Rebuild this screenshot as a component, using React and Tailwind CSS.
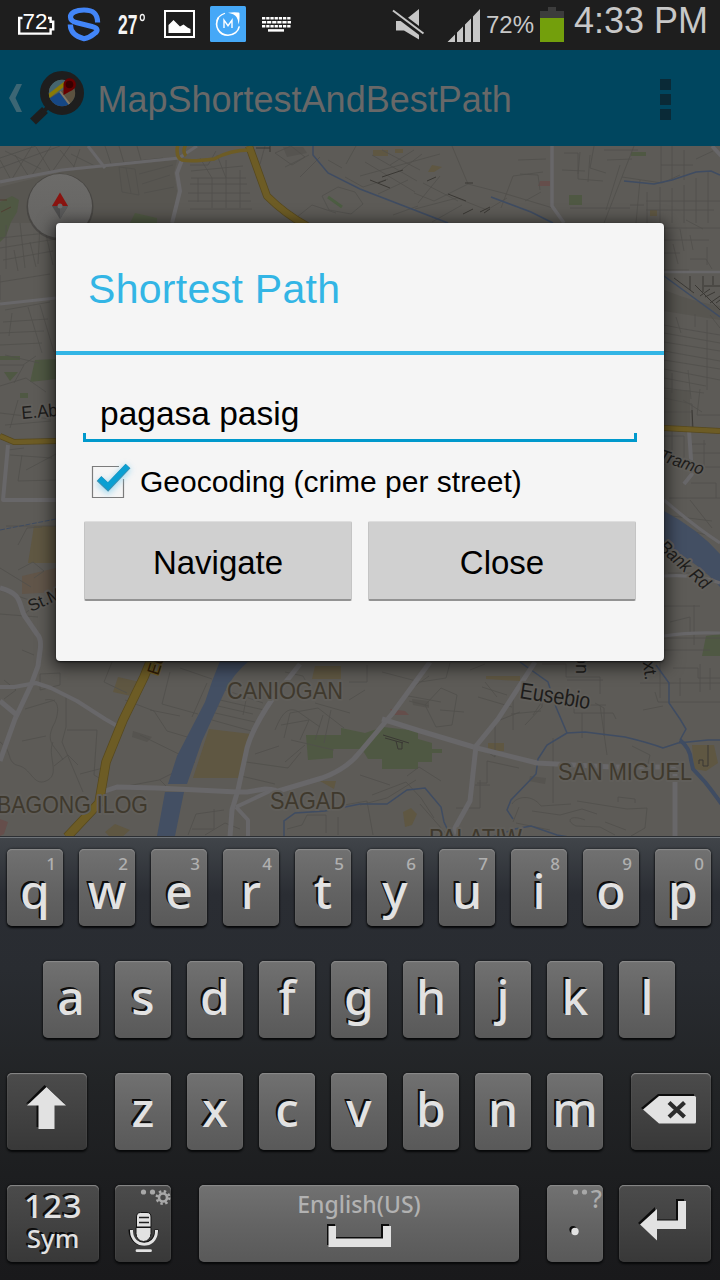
import React from "react";

const SANS = "font-['Liberation_Sans',Arial,sans-serif]";

function StatusBar() {
  return (
    <header className="flex h-[50px] shrink-0 items-start bg-[#1e1e1e] pl-[17px]">
      <svg className="h-[50px] w-[38px]" viewBox="17 0 38 50" aria-hidden="true">
        <path d="M22.500 18h-3.300v15.600h31.400v-4.200h2.600v-7.600h-2.600V18H48" fill="none" stroke="#fff" strokeWidth="2.400" />
        <text x="22.600" y="29.200" fontSize="22.500" textLength="25" lengthAdjust="spacingAndGlyphs" fill="#fff" fontFamily="Liberation Sans, Arial, sans-serif">72</text>
      </svg>
      <svg className="ml-[12px] h-[50px] w-[34px]" viewBox="67 0 34 50" aria-hidden="true">
        <path d="M97.600 22.500C97.500 12.500 92 10 84 10S70.500 12.500 70.500 17c0 3.500 2.500 4.800 6.500 5.800l15 3.700c6.500 1.700 6 4.500 2.500 7C91 36.500 88 38 84 38.700 79 37.500 70.500 34 70.300 24.500" fill="none" stroke="#4285f8" strokeWidth="5.200" strokeLinejoin="round" />
      </svg>
      <svg className="ml-[16px] h-[50px] w-[31px]" viewBox="117 0 31 50" aria-hidden="true">
        <text x="118" y="34" fontSize="28" fontWeight="700" textLength="19.500" lengthAdjust="spacingAndGlyphs" fill="#f4f4f4" fontFamily="Liberation Sans, Arial, sans-serif">27</text>
        <ellipse cx="142.300" cy="17.500" rx="2" ry="3" fill="none" stroke="#f4f4f4" strokeWidth="1.300" />
      </svg>
      <svg className="ml-[16px] h-[50px] w-[31px]" viewBox="164 0 31 50" aria-hidden="true">
        <rect x="165" y="11" width="29" height="26" fill="none" stroke="#fff" strokeWidth="2" />
        <path d="M168.500 33v-8l5-5 6.500 6.500 3.500-2 4 3 3 1.500v4z" fill="#fff" />
      </svg>
      <svg className="ml-[15px] h-[50px] w-[36px]" viewBox="210 0 36 50" aria-hidden="true">
        <rect x="210" y="6" width="36" height="36" rx="1.500" fill="#45a8f7" />
        <path d="M218.500 17.500c-5 9 1 17.800 9.500 17.800 6 0 10.300-4 11.300-9" fill="none" stroke="#fff" strokeWidth="1.600" />
        <path d="M216.800 21.500q.8-5.500 8.200-8.200" fill="none" stroke="#fff" strokeWidth="1.200" />
        <path d="M228 12.700q5-.6 10.500-.2 1 0 1 1 .3 7-1 11-.2-5-2-7.500-2.500-3.300-8.500-4.300z" fill="#fff" />
        <path d="M224 28v-7.800l4 5.500 4-5.500V28" fill="none" stroke="#fff" strokeWidth="1.400" />
      </svg>
      <svg className="ml-[15px] h-[50px] w-[31px]" viewBox="261 0 31 50" aria-hidden="true">
        <g stroke="#fff" strokeWidth="2.500">
          <path d="M262 18.200h29" strokeDasharray="3.300 .9" />
          <path d="M262 22.300h29" strokeDasharray="4.200 .9" />
          <path d="M262 26.300h29" strokeDasharray="3.300 .9" />
          <path d="M268 30.400h16" />
        </g>
      </svg>
      <svg className="ml-[100px] h-[50px] w-[33px]" viewBox="392 0 33 50" aria-hidden="true">
        <path d="M396 21h8l15-12v30.500L404 30.500h-8z" fill="#c6c6c6" />
        <path d="M392 10l31 23.500" stroke="#1e1e1e" strokeWidth="7" />
        <path d="M393 10.500l30.500 23" stroke="#c6c6c6" strokeWidth="2" />
      </svg>
      <svg className="ml-[22px] h-[50px] w-[33px]" viewBox="447 0 33 50" aria-hidden="true">
        <path d="M447.500 42l7.500-7.500V42zM457 42v-9.500l6-6V42zM465 42V24.500l6-6V42zM473 42V16.500l7-7.500v33z" fill="#c6c6c6" />
      </svg>
      <span className={`${SANS} ml-[6px] mt-[13px] w-[54px] text-[24px] leading-[24px] text-[#c8c8c8]`}>72%</span>
      <svg className="h-[50px] w-[24px]" viewBox="540 0 24 50" aria-hidden="true">
        <path d="M540 11h8V7h8v4h8v8h-24z" fill="#3c3c3c" />
        <path d="M540 18h24v24h-24z" fill="#739f0c" />
      </svg>
      <span className={`${SANS} ml-[10px] mt-[3px] whitespace-nowrap text-[36px] leading-[36px] text-[#c8c8c8]`}>4:33 PM</span>
    </header>
  );
}

function ActionBar() {
  return (
    <div className="flex h-[96px] shrink-0 items-center bg-[#00465f] pl-[8px]">
      <svg className="h-[96px] w-[80px]" viewBox="8 50 80 96" aria-hidden="true">
        <path d="M16.500 84h5.500l-6.500 14 6.500 14h-5.500L9 98z" fill="#3c6674" />
        <path d="M45 110l-12 11.500" stroke="#1e1e1e" strokeWidth="8.500" />
        <path d="M50 105l-8 8" stroke="#1e1e1e" strokeWidth="4" />
        <circle cx="62" cy="93" r="17.500" fill="none" stroke="#1e1e1e" strokeWidth="9" />
        <clipPath id="lens"><circle cx="62" cy="93" r="13.200" /></clipPath>
        <g clipPath="url(#lens)">
          <path d="M48 79h28v28H48z" fill="#5c5240" />
          <path d="M48 79h17v10L48 98z" fill="#45656f" />
          <path d="M47 100l13-8 12 16H48z" fill="#164784" />
          <path d="M47 97.500l18-14" stroke="#8a7a05" strokeWidth="4" />
          <path d="M60 91.500l12 16" stroke="#827867" strokeWidth="2" />
        </g>
        <path d="M63.500 95V84a6.200 6.200 0 1 1 12.300 1.500q-.5 3.500-6 6z" fill="#670000" />
        <circle cx="69.500" cy="84.500" r="3.800" fill="#380000" />
      </svg>
      <h1 className={`${SANS} ml-[9.5px] mt-[4px] text-[36px] leading-[40px] text-[#686868]`}>MapShortestAndBestPath</h1>
      <div className="ml-auto mr-[49px] flex flex-col gap-[4px] pt-[3px]">
        <i className="size-[11px] bg-[#0a2a37]" />
        <i className="size-[11px] bg-[#0a2a37]" />
        <i className="size-[11px] bg-[#0a2a37]" />
      </div>
    </div>
  );
}

const STREETS =
  "M0 158l36-12M0 168l60-22M12 179l20-33M32 175l19-29M52 172l18-26M0 160l10 18M15 155l14 22M36 147l15 25M60 150l16 19M71 154l24 12M105 146l6 18 52-6M119 146l5 17M137 146l4 14M5 151l36 18M80 149l-7 20" +
  "M119 167l16 2 4 26-17-3zM126 168l5 25M139 174l34-9M142 184l28-9M144 193l30-6" +
  "M190 165h18l8-14M191 178h55M190 184h57M188 193h62M188 201h63M190 209h62M198 178v24M212 178v30M226 160v48M240 170v38M191 171l52-5M200 158l12 20M217 155l9 23" +
  "M265 146l-5 18M275 153l16-7 14 11-13 8zM285 167l24-12M300 177l20-20M322 196l16-9 17 5 8 12-12 10-22-4zM292 221l20-16 24 8M345 177l18 10 25-8M356 146l-10 18M328 160l14 8" +
  "M360 176l80-22M365 162l50 30M372 155l45 26M382 150l38 20M390 165l24-15M400 171l22-17M378 194l30-14M452 146l16 38 35 9 50 15M468 184l-34 17-20-8M423 183l35 18M440 176l-22 27M415 209l42-11 30 12 20-12M393 215l25-9M462 205l-30 17M501 208l12-32 30-4M518 160l28-1M520 174l18 1 2 15M525 201l16-9" +
  "M564 153h14v26l25 2M562 170l23 1M590 155l-2 27M594 146l-4 22 16 5M604 150h34M607 160l25-1M634 146l-30 77M620 165l-14 45M622 177l40 6 18-8M640 180l-4 43M661 146v36M672 146v34M684 150v30M696 159l17-8M661 165h32M647 192v31M660 187v36M672 188v35M684 185v38M696 178v45M708 172v51M646 201h74M646 210h68M630 205h14M570 208h60M580 152l-2 22" +
  "M664 228h56M664 240h45M680 229l4 22M690 235l3 15M664 253h16M707 247v18M686 220l17 9M673 244l5 20M664 270h25M690 259h16l6 10M664 325l20 4 36 6M664 333l56 10M664 342l56 9M664 351l56 10M664 360l56 9M664 369l56 11M664 378l42 8M707 320v70M664 398l28 6v25M672 373v20M688 370l3 29M700 389l-3 26h23M664 388l40 5M664 412h28M683 400l19 12M710 315l10 13M676 317l5 16M695 314v13" +
  "M664 436h20v28h-20M672 431v34M691 444h15M692 453h28M697 467h23M691 483h25v15M704 440v30M669 498h51M664 515l48 6M670 525l40 11M690 500l22 28M668 573h52M664 550l35 3M664 606h36M670 622l20-5v18M694 605v40M664 638h56M688 548l10 8-12 7M664 650h46" +
  "M0 238l56-6M0 248l56-9M6 225v44M20 223l5 45M40 224l-2 40M3 260l50-9M14 250l4 21M30 242l6 25M45 230l8 35M0 282l50-8M5 310l45-8M3 322l45-3M0 333l44-2M0 345l42-2M28 307l14 46M40 305l14 47M12 313l-3 23M0 365h23l13-9M0 386l26-8 20 14M18 400l-8 28M0 413l51 6M5 425l46-4M24 365l-10 18M0 275v25M5 355l34 8" +
  "M22 455l-4 26 38-1M8 450l16-2M26 470l30-16M6 526h50M18 545l9-17 15-1M0 568l31 19M18 570l15-8 11 9-10 7M0 590l35 12M0 614l38 3M21 616l21-15M22 650l12 5M10 455l42 3" +
  "M40 674l20-1v12l-20 5zM4 680l12 10-12 9M45 700c18-4 13 18 8 26-8 18 3 20 10 34M0 742c14 10 5 21 20 24 12 4 14 22 28 14 12-7-1-25 5-38M66 697v30l-4 15 21 50M67 730h30l-3 45 12 7M112 662l-8 20 23 11M125 700l29 11 13 20 27 8M170 672l-8 32 36 10M192 717l15-34M140 735l55 27-36 18-48 9M150 710l30 6M180 668l32 11M22 741l24-5M78 765l-10-10-14 11M160 780l8 8M55 700l-30 9M80 774l23-6" +
  "M218 706l35 8M215 713l40 9M212 720l43 12M220 700l44 10M225 690l38 13M248 690l-5 25M275 730c5-12 12-27 25-17l20 14M281 725l28-5-9 20M284 738l6-25 28-5 26 20M291 740l43 10M315 703l35 10M323 715l-8 25M331 710l-7 33M305 745l-20 17M246 762l42 6 13-16M255 754l24-8M241 776l34 8M349 682h18v-17M349 700l16-10M285 672l18 4 8 15M188 835l8-21 28-4M192 829h22v-20M205 835l20-12 15 6M287 829l15-4 5-10h19v18M338 817v18M327 808l40-7 6 34M372 795l34-13 15 16 13 20" +
  "M382 672l38 10 26-4 4-15M403 695l38 7M425 705l16-17 16 7-5 30-16 2zM440 710l24 2M415 686l14-10M429 706l-20-5M470 670l15-6M485 682l12 15M478 697l34 10M511 714l30-3M513 730v-35M525 725l17-18v-15M533 715l10-15M482 687l25 8M542 664h24v13h34v17M567 680h36M574 696v17h39l3 6M582 713v25M595 703l9 5v28M606 705h-20M655 692l3 10h62M640 683h80M660 663v35M673 668h25v10h22M700 664v28M710 668v22M643 710l20-4M680 696v-18M480 747l15 10v-35M500 720l20-8M553 738v65M477 783h10v-22l32 7M600 705l7 50M512 804c5-8 20-10 29 2l30-2M519 807l-6 15M532 811l28 4 22-6 15 5M577 801l50 8 20-1-2 20-14 8M618 802v-5l17 2v4M585 820c-15-6-20 1-9 6l24 1 15 8M516 823l34 7M605 822l21 8M632 746l18 9-5 22M360 775l30 10M407 776l12-9 22 14M360 805l27-7 29-18M420 804l29 33M480 780v28h-24M475 785h15";

const WHITE_ROADS = [
  ["M0 182L62 170l117-12 18-12", 3.2],
  ["M88 146l17 22", 3],
  ["M182 160l-5 13 3 18-8 32", 4],
  ["M552 146v60l12 17", 3.5],
  ["M712 146l12 13", 4],
  ["M0 304l56-6", 3],
  ["M664 272h56", 2.6],
  ["M689 430l3 44-8 10", 4],
  ["M8 445L3 500H56", 4],
  ["M0 588c22 6 18 13 24 27l13 19q5 5 3 17l-2 15-7 19-16 34-15 42", 5],
  ["M0 687h14l22-4 15 5 26 13 28 18 14 8", 4],
  ["M0 701l18 15", 5],
  ["M664 500q30 26 56 43M664 576q35-2 56 7M664 636q24-4 56-3", 3.2],
  ["M300 664l-27 34q-20 29-26 50l-9 42-6 20-2 27", 5],
  ["M105 791l12-4 40 1 80 4h10l18-3q15 1 10 3l47-14q25-9 38-26l32-38 38-52", 5],
  ["M236 807l34-16M236 807l12 13v18", 4],
  ["M382 719l35 11 60 18 60 15 75 4h58l5 3v68", 5],
  ["M535 662l-37 57-22 27-6 55-15 27-3 10", 5],
];

function MapCanvas() {
  return (
    <svg className="block h-[690px] w-[720px] shrink-0" viewBox="0 146 720 690" role="img" aria-label="Map">
      <defs>
        <linearGradient id="dial" x1="0" y1="0" x2="0" y2="1">
          <stop offset="0" stopColor="#6c6b69" />
          <stop offset="1" stopColor="#656462" />
        </linearGradient>
      </defs>
      <rect y="146" width="720" height="690" fill="#5d5b57" />
      <path d="M60 172l117-12-3 13 3 18-5 32H0v-36z" fill="#585651" />
      <path d="M664 290q30 12 56 16v14l-56-9zM664 390h26v36h-26z" fill="#575550" />
      <g fill="#4f5843">
        <path d="M0 202l12-6 7 4-2 12-6 10-5 14-6 6zM135 213l22 5v5h-27zM569 195h13v10h-13zM631 152h15v4h-15zM0 356h20v4H0zM35 360l21-1v20l-26 3zM4 372h14l-8 9zM20 393h8v5h-8z" />
        <path d="M306 735h35v-7l24 5 18-6 35 4v8l14 4v6h10v4h-10v9h-14v7h-36v-10h-14l-6-10h-29v9l-25 2z" />
        <path d="M706 636l14-2v22h-18z" />
      </g>
      <g fill="#5f5742">
        <path d="M373 150h15v6h-15zM395 149h8v4h-8zM432 165l10 2-8 5h-6zM650 210h7v6h-7zM34 526h22v37H28zM118 677l22 5-9 14-18-4zM209 729l42 5-10 44h-48zM105 832l10-8 15 6-8 7h-12zM315 666h26v13h-29zM486 676h34v5l-34-2zM488 743h16v8h-16zM320 781h16l-2 8zM403 812l8-4 6 6-5 11-7 2zM692 745h22l4 18-12 8-12-2z" />
      </g>
      <path d="M22 576l34-8v24l-34 2z" fill="#615549" />
      <path d="M540 181h10v5h-12zM0 819l8 3-4 12-4 2zM390 709l15 2 4 4h-15z" fill="#654e4b" />
      <path d="M283 147h20l4 6-20 4zM412 699l17 2v7l-16-3zM133 731l19 6-5 5-15-5zM530 776l16 2-1 6-16-3z" fill="#565450" />
      <path d={STREETS} fill="none" stroke="#514f4b" strokeWidth=".8" strokeLinejoin="round" />
      <g fill="none" stroke="#3a3834" strokeWidth="1">
        <path d="M370 180l20 8M382 177l21-7M378 183l8-3M427 181l9-4M448 194l18 7M465 183h8M463 214l10-5M480 212l10-5M484 213l6-4M383 735l26 8M385 738l18 5M396 741l2 8h4v-7M699 764v-4h4v6h5v-21M674 278l20 15M690 276v14M695 285l28 28M703 276v16M713 276v9M704 286h16M700 296l10-7M705 297l10-5M710 303l10-7M716 303l4-3M692 410l1 20" />
        <path d="M256 148h14M270 146v6" />
        <path d="M0 200h7M1 212l10-5" stroke="#513e32" />
      </g>
      <g fill="none" stroke="#3f4c62" strokeWidth="1.500">
        <path d="M313 146v9l15 18 32 16 88 34M491 197l40 15 22 11M624 181l30 3 18-4 24-8 15-1 9 4M664 276l56 41" />
        <path d="M0 530l56-11" strokeDasharray="5 1.500" strokeWidth="1" />
        <path d="M284 838v-17l11-8 30-2 35-7h27l20-14 18-2 16 19 3 15 8 17h35l28-10 16-3 26 9 30 5 14 9M520 662l14 10 14 10 8 25 11 26 18-1 40 5q25 6 38 11l15-5 30-3h12M567 733l-20 12-9 14-2 15-25 26-4 10 6 9M656 665l13 18v20l11 16 6 10-6 11" />
        <path d="M680 740q10 8 11 20l2 9 12 13q8 10 18 24" strokeWidth="4" />
      </g>
      <path d="M664 511q34 18 56 43v33q-18-21-56-43z" fill="#434f63" />
      <path d="M220 661h29q-15 12-24 30l-23 50-15 43h-19l9-28 28-54q7-22 15-41zM165 792h19l-9 44h-18z" fill="#434f63" />
      <g fill="none" stroke="#686769" strokeLinecap="butt" strokeLinejoin="round">
        {WHITE_ROADS.map(([d, w]) => (
          <path key={d} d={d} strokeWidth={w} />
        ))}
      </g>
      <g fill="none" stroke="#57491e" strokeLinejoin="round">
        <path d="M249 146q10 28 18 50 18 18 40 30" strokeWidth="8" />
        <path d="M0 436l14 6 42-1M664 428l56 3" strokeWidth="6" />
        <path d="M153 655l-9 22-21 43-17 42-7 41-32 34" strokeWidth="9.500" />
      </g>
      <g fill="none" stroke="#6d5c25" strokeLinejoin="round">
        <path d="M178 144q-3 13 4 16 10 2 32-1 16-9 36-9M186 144q-4 8 0 12" strokeWidth="3.500" />
        <path d="M249 146q10 28 18 50 18 18 40 30" strokeWidth="6.500" />
        <path d="M0 436l14 6 42-1M664 428l56 3" strokeWidth="4.500" />
        <path d="M153 655l-9 22-21 43-17 42-7 41-32 34" strokeWidth="8" />
      </g>
      <path d="M328 197l14 10" stroke="#4c5d42" strokeWidth="3" />
      <g fontFamily="Liberation Sans, Arial, sans-serif" stroke="#605e5a" strokeWidth="4" strokeLinejoin="round" paintOrder="stroke">
        <g fontSize="24" fill="#3f392d">
          <text x="227" y="699" textLength="116" lengthAdjust="spacingAndGlyphs">CANIOGAN</text>
          <text x="-3" y="813" textLength="151" lengthAdjust="spacingAndGlyphs">BAGONG ILOG</text>
          <text x="270" y="809" textLength="76" lengthAdjust="spacingAndGlyphs">SAGAD</text>
          <text x="558" y="780" textLength="134" lengthAdjust="spacingAndGlyphs">SAN MIGUEL</text>
          <text x="429" y="846" textLength="93" lengthAdjust="spacingAndGlyphs">PALATIW</text>
        </g>
        <g fill="#1d1c1a">
          <text x="519" y="698" fontSize="23" textLength="71" lengthAdjust="spacingAndGlyphs" transform="rotate(9 519 698)">Eusebio</text>
          <text x="22" y="419" fontSize="18" textLength="62" lengthAdjust="spacingAndGlyphs" transform="rotate(-5 22 419)">E.Abello</text>
          <text x="31" y="612" fontSize="17" transform="rotate(-24 31 612)">St.Martin</text>
          <text x="576" y="645" fontSize="18" transform="rotate(90 576 645)" textLength="29">son</text>
          <text x="641" y="650" fontSize="18" transform="rotate(82 641 650)">Ext.</text>
          <text x="658" y="460" fontSize="17" fontStyle="italic" textLength="46" lengthAdjust="spacingAndGlyphs" transform="rotate(19 658 460)">Tramo</text>
          <text x="648" y="540" fontSize="18" fontStyle="italic" textLength="75" lengthAdjust="spacingAndGlyphs" transform="rotate(42 648 540)">y Bank Rd</text>
        </g>
        <text x="158" y="676" fontSize="17" fill="#301c08" stroke="#6d5c25" strokeWidth="2" transform="rotate(-72 158 676)">Eulogio</text>
      </g>
      <circle cx="60" cy="207" r="33.500" fill="#3d3c3a" opacity=".6" />
      <circle cx="60" cy="206" r="32" fill="url(#dial)" />
      <path d="M60 192.500l8 13.500H52z" fill="#8a1410" />
      <path d="M60 219l8-13H52z" fill="#4d4d4d" />
      <path d="M60 219v-13h8z" fill="#5a5a5a" />
      <circle cx="60" cy="206" r="2.500" fill="#6b6b6b" />
    </svg>
  );
}

function DialogButton({ children }) {
  return (
    <button className="h-[80px] w-[268px] rounded-[2px] border border-t-[#dedede] border-x-[#c4c4c4] border-b-2 border-b-[#929292] bg-[#d0d0d0] pt-[5px] text-[33px] leading-[40px] text-black">
      {children}
    </button>
  );
}

function PathDialog() {
  return (
    <section className={`${SANS} absolute left-[56px] top-[223px] flex h-[438px] w-[608px] flex-col rounded-[4px] bg-[#f5f5f5] shadow-[0_3px_16px_4px_rgba(0,0,0,0.55),0_1px_2px_#222]`}>
      <h2 className="h-[128px] pl-[32px] pt-[42px] text-[41px] leading-[48px] tracking-[0.3px] text-[#33b5e5]">Shortest Path</h2>
      <div className="h-[4px] shrink-0 bg-[#33b5e5]" />
      <div className="flex flex-col px-[27px] pt-[35px]">
        <div className="flex h-[52px] flex-col justify-end">
          <p className="pl-[17px] text-[33.5px] leading-[39px] text-black">pagasa pasig</p>
          <div className="h-[9px] shrink-0 border-x-[3px] border-b-[3px] border-[#0099cc]" />
        </div>
        <label className="mt-[18px] flex h-[46px] items-center">
          <svg className="h-[46px] w-[57px] shrink-0 overflow-visible" viewBox="83 459 57 46" aria-hidden="true">
            <defs>
              <filter id="halo" x="-50%" y="-50%" width="200%" height="200%">
                <feGaussianBlur stdDeviation="3" />
              </filter>
            </defs>
            <path d="M119 465.500H92.500v31h31V478" fill="none" stroke="#7b7b7b" strokeWidth="1.200" />
            <path d="M99 480l9 8 20-22" fill="none" stroke="#7ccdee" strokeWidth="8" filter="url(#halo)" opacity=".7" />
            <path d="M99 477.500l9 8.500 20-21" fill="none" stroke="#3f8faf" strokeWidth="6.800" />
            <path d="M99.500 477.500l8.500 8 19.700-20.500" fill="none" stroke="#0a9fd2" strokeWidth="5.500" />
          </svg>
          <span className="whitespace-nowrap pb-[2px] text-[30px] leading-[40px] text-black">Geocoding (crime per street)</span>
        </label>
        <div className="mt-[15px] flex gap-[16px] pl-[1px]">
          <DialogButton>Navigate</DialogButton>
          <DialogButton>Close</DialogButton>
        </div>
      </div>
    </section>
  );
}

const KEY = "relative h-[77px] shrink-0 rounded-[5px] text-center text-[#e2e2e2] shadow-[inset_0_1px_1px_#8b8b8b,0_2px_2px_#08090a,0_0_2px_1px_rgba(0,0,0,0.3)]";
const LIGHT = "bg-linear-to-b from-[#717171] via-[#646464] to-[#595959]";
const DARK = "bg-linear-to-b from-[#4b4b4b] via-[#424242] to-[#383838]";
const INK = "[text-shadow:-1px_-1px_0_#111,-2px_-2px_0_#0a0a0a]";

function LetterKey({ letter, digit }) {
  return (
    <button className={`${KEY} ${LIGHT} flex w-[56px] items-start justify-center`}>
      {digit && <span className="absolute right-[7px] top-0 text-[17px] font-medium leading-[29px] text-[#b0b0b0]">{digit}</span>}
      <span className={`${INK} text-[48px] font-medium ${digit ? "pt-[6px] leading-[71px]" : "leading-[71px]"}`}>{letter}</span>
    </button>
  );
}

function Glyph({ box, className, children }) {
  return (
    <svg className={`${className} block h-[77px]`} viewBox={box} aria-hidden="true">
      {children}
    </svg>
  );
}

function Keyboard() {
  return (
    <div className="flex h-[444px] shrink-0 flex-col gap-[35px] border-t border-[#2d3034] bg-[linear-gradient(#41454a_0%,#2a2d33_13%,#292c31_30%,#222426_55%,#1c1d1f_80%,#19191b_100%)] px-[7px] pt-[12px] font-['Noto_Sans',sans-serif] shadow-[inset_0_1px_0_#6e7378]">
      <div className="flex gap-[16px]">
        {"qwertyuiop".split("").map((c, i) => (
          <LetterKey key={c} letter={c} digit={String((i + 1) % 10)} />
        ))}
      </div>
      <div className="flex gap-[16px] pl-[36px]">
        {"asdfghjkl".split("").map((c) => (
          <LetterKey key={c} letter={c} />
        ))}
      </div>
      <div className="flex">
        <button aria-label="Shift" className={`${KEY} ${DARK} w-[80px]`}>
          <Glyph box="7 1073 80 77" className="w-[80px]">
            <path d="M44.500 1085l20 18.500H53v23.500H36.500v-23.500H26z" fill="#0c0c0c" />
            <path d="M46.500 1087l19.500 18.500H54.500V1129h-16v-23.500H27z" fill="#e2e2e2" />
          </Glyph>
        </button>
        <div className="mx-[28px] flex gap-[16px]">
          {"zxcvbnm".split("").map((c) => (
            <LetterKey key={c} letter={c} />
          ))}
        </div>
        <button aria-label="Delete" className={`${KEY} ${DARK} w-[80px]`}>
          <Glyph box="631 1073 80 77" className="w-[80px]">
            <path d="M641 1108l17-14h36v26h-36z" fill="#0c0c0c" />
            <path d="M643 1109.500l16-13.500h35.500q1.500 0 1.500 1.500v24.500q0 1.500-1.500 1.500H659z" fill="#e2e2e2" />
            <path d="M669 1102.500l15.500 14.500M684.500 1102.500L669 1117" stroke="#2c2c2c" strokeWidth="4.200" />
          </Glyph>
        </button>
      </div>
      <div className="flex">
        <button className={`${KEY} ${DARK} ${INK} flex w-[92px] flex-col items-center font-medium`}>
          <span className="h-[35px] text-[33px] leading-[42px] tracking-[0.5px]">123</span>
          <span className="text-[26px] leading-[36px]">Sym</span>
        </button>
        <button aria-label="Voice input" className={`${KEY} ${DARK} ml-[16px] w-[56px]`}>
          <Glyph box="115 1185 56 77" className="w-[56px]">
            <g fill="#a8a8a8">
              <circle cx="143.500" cy="1192" r="2.600" />
              <circle cx="152.500" cy="1192" r="2.600" />
            </g>
            <circle cx="163" cy="1197.500" r="4" fill="none" stroke="#a8a8a8" strokeWidth="2.600" />
            <circle cx="163" cy="1197.500" r="6.200" fill="none" stroke="#a8a8a8" strokeWidth="2.600" strokeDasharray="2.400 2.470" />
            <path d="M130.500 1229.500v1c1 18 25 18 26 0v-1" fill="none" stroke="#0c0c0c" strokeWidth="4" />
            <path d="M136.500 1217q0-4.500 4-4.500h6.500q4 0 4 4.500v10h-14.500z" fill="#e2e2e2" stroke="#151515" />
            <path d="M139 1217.500h10M139 1222.500h10" stroke="#222" strokeWidth="1.300" />
            <path d="M136 1227.500h15v6a7.500 8 0 0 1-15 0z" fill="#e2e2e2" stroke="#151515" />
            <path d="M131.500 1230v1.500c1 17 24.500 17 25 0v-1.500" fill="none" stroke="#e2e2e2" strokeWidth="3" />
            <path d="M137 1250.700h13.500" stroke="#e2e2e2" strokeWidth="2.800" strokeLinecap="round" />
          </Glyph>
        </button>
        <button className={`${KEY} ${LIGHT} ml-[28px] w-[320px]`}>
          <span className="absolute inset-x-0 top-0 text-[23px] font-medium leading-[38px] text-[#b2b2b2]">English(US)</span>
          <Glyph box="199 1185 320 77" className="w-[320px]">
            <path d="M327 1224h8v13h46v-13h8v21h-62z" fill="#0c0c0c" />
            <path d="M328.500 1226h7.500v12.500h47V1226h8v21h-62.500z" fill="#e2e2e2" />
          </Glyph>
        </button>
        <button className={`${KEY} ${LIGHT} ml-[28px] w-[56px]`}>
          <span className="absolute right-[1px] top-0 text-[25px] font-medium leading-[27px] text-[#adadad]">?</span>
          <Glyph box="547 1185 56 77" className="w-[56px]">
            <circle cx="575.500" cy="1192" r="2.600" fill="#a8a8a8" />
            <circle cx="584.500" cy="1192" r="2.600" fill="#a8a8a8" />
            <circle cx="573" cy="1229.500" r="3.600" fill="#0c0c0c" />
            <circle cx="575" cy="1231.500" r="3.700" fill="#e2e2e2" />
          </Glyph>
        </button>
        <button aria-label="Enter" className={`${KEY} ${DARK} ml-[16px] w-[92px]`}>
          <Glyph box="619 1185 92 77" className="w-[92px]">
            <path d="M638 1223l17-16v12.500h21V1199h8v28h-29v10z" fill="#0c0c0c" />
            <path d="M640 1224.500l17-15.500v11.500h21V1201h8v28h-29v11.500z" fill="#e2e2e2" />
          </Glyph>
        </button>
      </div>
    </div>
  );
}

export default function App() {
  return (
    <main className="relative flex h-[1280px] w-[720px] flex-col overflow-hidden bg-[#1e1e1e]">
      <StatusBar />
      <ActionBar />
      <MapCanvas />
      <Keyboard />
      <PathDialog />
    </main>
  );
}
